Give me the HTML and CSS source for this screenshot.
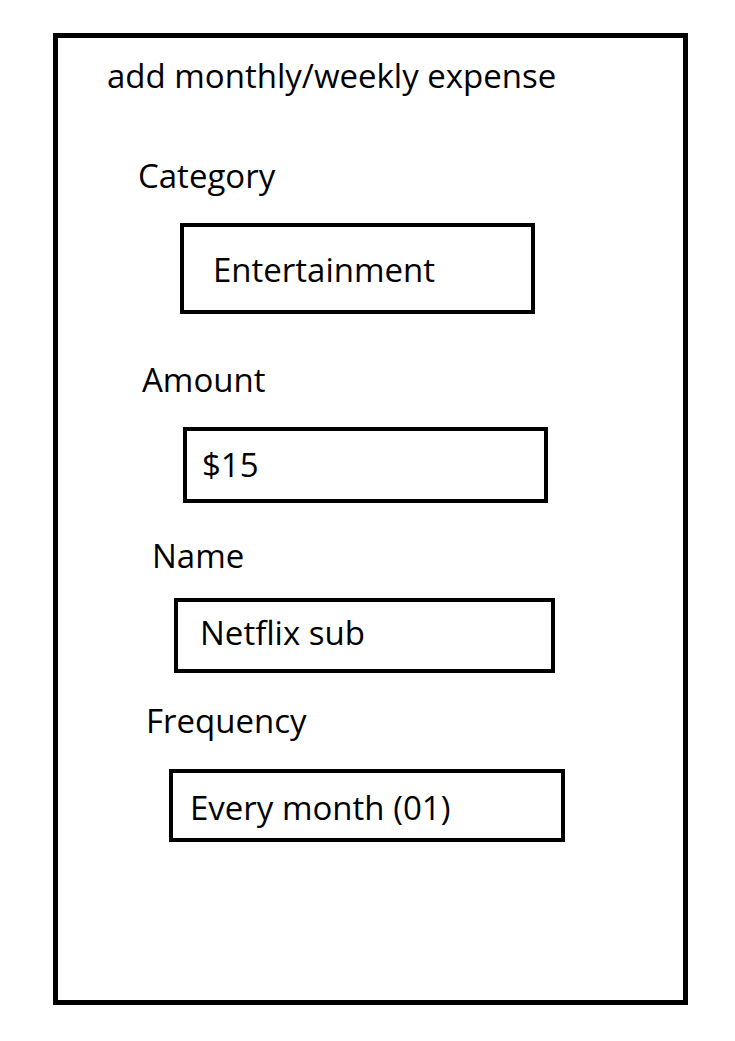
FILE: index.html
```html
<!DOCTYPE html>
<html lang="en">
<head>
  <meta charset="UTF-8">
  <meta name="viewport" content="width=device-width, initial-scale=1.0">
  <title>add monthly/weekly expense</title>
  <link rel="stylesheet" href="styles.css">
</head>
<body>
  <main class="sheet">
    <h1 class="title">add monthly/weekly expense</h1>

    <section class="field field--category">
      <p class="field-label">Category</p>
      <div class="field-box">Entertainment</div>
    </section>

    <section class="field field--amount">
      <p class="field-label">Amount</p>
      <div class="field-box">$15</div>
    </section>

    <section class="field field--name">
      <p class="field-label">Name</p>
      <div class="field-box">Netflix sub</div>
    </section>

    <section class="field field--frequency">
      <p class="field-label">Frequency</p>
      <div class="field-box">Every month (01)</div>
    </section>
  </main>
</body>
</html>
```

FILE: styles.css
```css
body {
  margin: 0;
  background: #fff;
  color: #000;
  font-family: "Open Sans", "Noto Sans", sans-serif;
}

.sheet {
  box-sizing: border-box;
  width: 635px;
  height: 972px;
  margin: 33px 0 0 53px;
  padding-top: 22px;
  border: 5px solid #000;
  display: flex;
  flex-direction: column;
}

.title {
  margin: 0 0 0 49px;
  font-size: 33px;
  font-weight: 400;
  line-height: 32px;
}

.field {
  display: flex;
  flex-direction: column;
  align-items: flex-start;
}

.field-label {
  margin: 0;
  font-size: 33px;
  line-height: 32px;
}

.field-box {
  box-sizing: border-box;
  display: flex;
  align-items: center;
  border: 4px solid #000;
  font-size: 33px;
  line-height: 32px;
}

/* hand drawn, so every row sits a little differently */
.field--category { margin-top: 68px; }
.field--category .field-label { margin: 0 0 31px 80px; }
.field--category .field-box {
  margin-left: 122px;
  width: 355px;
  height: 91px;
  padding: 3px 0 0 29px;
}

.field--amount { margin-top: 50px; }
.field--amount .field-label { margin: 0 0 31px 84px; }
.field--amount .field-box {
  margin-left: 125px;
  width: 365px;
  height: 76px;
  padding: 0 0 0 15px;
}

.field--name { margin-top: 37px; }
.field--name .field-label { margin: 0 0 26px 94px; }
.field--name .field-box {
  margin-left: 116px;
  width: 381px;
  height: 75px;
  padding: 0 0 6px 22px;
}

.field--frequency { margin-top: 32px; }
.field--frequency .field-label { margin: 0 0 32px 88px; }
.field--frequency .field-box {
  margin-left: 111px;
  width: 396px;
  height: 73px;
  padding: 5px 0 0 17px;
}
```
